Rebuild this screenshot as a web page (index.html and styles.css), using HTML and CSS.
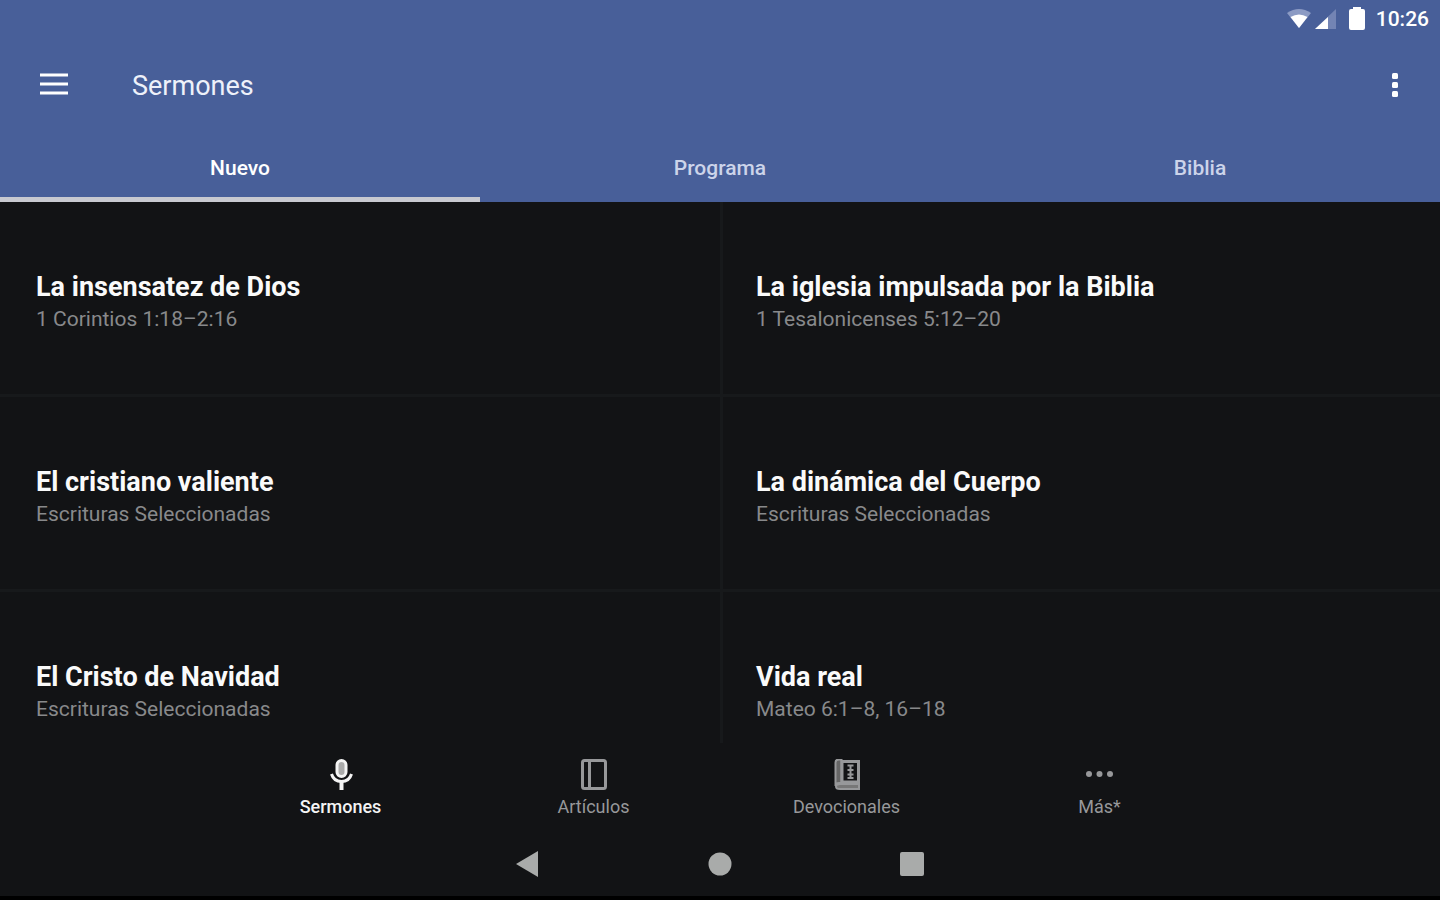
FILE: index.html
```html
<!DOCTYPE html>
<html lang="es">
<head>
<meta charset="utf-8">
<meta name="viewport" content="width=device-width, initial-scale=1">
<title>Sermones</title>
<link rel="stylesheet" href="styles.css">
</head>
<body>
<div class="app">
  <header class="header">
    <div class="status">
      <svg class="status-wifi" width="24" height="20" viewBox="0 0 24 20" aria-hidden="true"><path d="M0 4Q12-4 24 4L12 19Z" fill="#8c9bc4"/><path d="M3.500 8Q12 3 20.500 8L12 19Z" fill="#fff"/></svg>
      <svg class="status-signal" width="22" height="20" viewBox="0 0 22 20" aria-hidden="true"><path d="M0 20L21 0V20Z" fill="#7384b4"/><path d="M0 20L13 8V20Z" fill="#fff"/></svg>
      <svg class="status-battery" width="16" height="24" viewBox="0 0 16 24" aria-hidden="true"><path d="M4 0h8v2h2q2 0 2 2v17q0 2-2 2H2q-2 0-2-2V4q0-2 2-2h2Z" fill="#fff"/></svg>
      <time class="clock">10:26</time>
    </div>
    <div class="toolbar">
      <button class="icon-button" type="button" aria-label="Menú">
        <svg width="28" height="24" viewBox="0 0 28 24"><path d="M0 2h28M0 11h28M0 20h28" stroke="#fff" stroke-width="3"/></svg>
      </button>
      <h1 class="title">Sermones</h1>
      <button class="icon-button" type="button" aria-label="Más opciones">
        <svg width="6" height="26" viewBox="0 0 6 26"><rect width="6" height="6" y="1" rx="1.500" fill="#fff"/><rect width="6" height="6" y="10" rx="1.500" fill="#fff"/><rect width="6" height="6" y="19" rx="1.500" fill="#fff"/></svg>
      </button>
    </div>
    <nav class="tabs" aria-label="Secciones">
      <button class="tab tab-active" type="button">Nuevo</button>
      <button class="tab" type="button">Programa</button>
      <button class="tab" type="button">Biblia</button>
    </nav>
  </header>
  <main class="grid">
    <article class="card"><h2 class="card-title">La insensatez de Dios</h2><p class="card-text">1 Corintios 1:18–2:16</p></article>
    <article class="card"><h2 class="card-title">La iglesia impulsada por la Biblia</h2><p class="card-text">1 Tesalonicenses 5:12–20</p></article>
    <article class="card"><h2 class="card-title">El cristiano valiente</h2><p class="card-text">Escrituras Seleccionadas</p></article>
    <article class="card"><h2 class="card-title">La dinámica del Cuerpo</h2><p class="card-text">Escrituras Seleccionadas</p></article>
    <article class="card"><h2 class="card-title">El Cristo de Navidad</h2><p class="card-text">Escrituras Seleccionadas</p></article>
    <article class="card"><h2 class="card-title">Vida real</h2><p class="card-text">Mateo 6:1–8, 16–18</p></article>
  </main>
  <nav class="bottom" aria-label="Principal">
    <button class="item item-active" type="button">
      <svg width="32" height="32" viewBox="0 0 32 32" fill="none" stroke="currentColor"><rect x="12" y="1.500" width="9" height="16" rx="4.500" fill="#aaa" stroke-width="3"/><path d="M6.500 15C8 20 12 22.500 16.500 22.500S25 20 26.500 15" stroke-width="3"/><path d="M16.500 22v9" stroke-width="4"/></svg>
      <span>Sermones</span>
    </button>
    <button class="item" type="button">
      <svg width="32" height="32" viewBox="0 0 32 32" fill="none" stroke="currentColor" stroke-width="3"><rect x="4.500" y="1.500" width="23" height="28" rx="2"/><path d="M11.500 2v27"/></svg>
      <span>Artículos</span>
    </button>
    <button class="item" type="button">
      <svg width="32" height="32" viewBox="0 0 32 32" fill="none" stroke="currentColor"><path d="M28 25H9Q5 25 5 27.500Q5 30 9 30H28V25Z" fill="#777" stroke-width="2"/><path d="M4.500 27V3.500Q4.500 0.500 8 0.500H10.500V24H8Q4.500 24 4.500 27Z" fill="#666" stroke-width="2"/><path d="M11 2.500H27.500V23H11Z" stroke-width="3"/><path d="M16.500 6.500h6M16.500 11h6M16.500 15.500h6M16.500 19h6M19.500 6v13" stroke-width="2"/></svg>
      <span>Devocionales</span>
    </button>
    <button class="item" type="button">
      <svg width="32" height="32" viewBox="0 0 32 32" fill="currentColor"><circle cx="5" cy="15" r="3"/><circle cx="15.500" cy="15" r="3"/><circle cx="26" cy="15" r="3"/></svg>
      <span>Más*</span>
    </button>
  </nav>
  <div class="system">
    <button class="key" type="button" aria-label="Atrás"><svg width="24" height="26" viewBox="0 0 24 26"><path d="M0 13L22 0V26Z"/></svg></button>
    <button class="key" type="button" aria-label="Inicio"><svg width="24" height="24" viewBox="0 0 24 24"><circle cx="12" cy="12" r="11.500"/></svg></button>
    <button class="key" type="button" aria-label="Recientes"><svg width="24" height="24" viewBox="0 0 24 24"><rect width="24" height="24" rx="2"/></svg></button>
  </div>
</div>
</body>
</html>
```
FILE: styles.css
```css
* { box-sizing: border-box; }
body {
  margin: 0;
  background: #121315;
  color: #fff;
  font-family: Roboto, "Liberation Sans", sans-serif;
}
button {
  margin: 0;
  padding: 0;
  border: 0;
  background: none;
  color: inherit;
  font: inherit;
  cursor: pointer;
}
svg { display: block; }
.app {
  display: flex;
  flex-direction: column;
  height: 100vh;
  border-bottom: 4px solid #000;
}
.header { background: #485f99; }
.status {
  display: flex;
  align-items: center;
  justify-content: flex-end;
  height: 38px;
  padding-right: 11px;
}
.status-signal { margin-left: 4px; }
.status-battery { margin-left: 12px; }
.clock {
  margin-left: 11px;
  font-size: 21px;
  font-weight: 500;
  line-height: 24px;
}
.toolbar {
  display: flex;
  align-items: center;
  height: 94px;
  padding: 0 42px 0 40px;
}
.title {
  flex: 1;
  margin: 0 0 0 64px;
  padding-top: 2px;
  color: #eef1fa;
  font-size: 27px;
  font-weight: 400;
  line-height: 32px;
}
.tabs {
  display: grid;
  grid-template-columns: repeat(3, 1fr);
}
.tab {
  height: 70px;
  padding-top: 7px;
  border-bottom: 5px solid transparent;
  color: #ccd4ea;
  font-size: 21px;
  font-weight: 500;
}
.tab-active {
  border-color: #c8c9d0;
  color: #fff;
}
.grid {
  flex: 1;
  display: grid;
  grid-template-columns: 1fr 1fr;
  grid-auto-rows: 195px;
  align-content: start;
  min-height: 0;
  overflow: hidden;
}
.card {
  display: flex;
  flex-direction: column;
  justify-content: center;
  padding: 10px 36px 0;
  border-bottom: 3px solid #17191b;
}
.card:nth-child(even) {
  padding-left: 33px;
  border-left: 3px solid #17191b;
}
.card-title {
  margin: 0;
  color: #fafafa;
  font-size: 27px;
  font-weight: 700;
  line-height: 32px;
}
.card-text {
  margin: 0;
  color: #88898b;
  font-size: 21px;
  line-height: 32px;
}
.bottom {
  display: flex;
  justify-content: center;
  height: 88px;
}
.item {
  display: flex;
  flex: 0 1 253px;
  flex-direction: column;
  align-items: center;
  gap: 4px;
  padding-top: 16px;
  color: #97989a;
  font-size: 18px;
  line-height: 24px;
}
.item-active {
  color: #f4f4f4;
  font-weight: 500;
}
.system {
  display: flex;
  justify-content: center;
  height: 65px;
}
.key {
  display: flex;
  flex: 0 1 192px;
  align-items: center;
  justify-content: center;
  fill: #a9abaa;
}
```
